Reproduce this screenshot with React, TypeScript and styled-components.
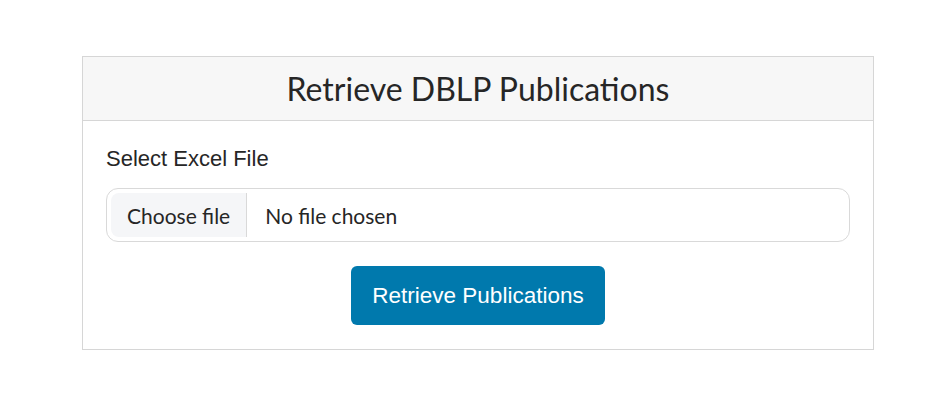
import React from "react";
import styled, { createGlobalStyle } from "styled-components";

const Global = createGlobalStyle`
  html, body { margin: 0; padding: 0; background: #ffffff; }
  body { font-family: "Liberation Sans", Arial, sans-serif; }
`;

const Page = styled.div`
  padding: 56px 75px 0 82px;
  width: 949px;
  box-sizing: border-box;
`;

const Card = styled.div`
  width: 792px;
  border: 1px solid #d6d6d6;
  box-sizing: border-box;
  background: #fff;
`;

const Header = styled.div`
  height: 64px;
  background: #f7f7f7;
  border-bottom: 1px solid #d6d6d6;
  display: flex;
  align-items: center;
  justify-content: center;
  box-sizing: border-box;
`;

const Title = styled.h1`
  margin: 0;
  font-family: Lato, "Open Sans", sans-serif;
  font-weight: 400;
  font-size: 32px;
  color: #262626;
`;

const Body = styled.div`
  padding: 24px 23px 24px 23px;
  display: flex;
  flex-direction: column;
`;

const Label = styled.label`
  font-family: "Liberation Sans", Arial, sans-serif;
  font-size: 22px;
  color: #262626;
  line-height: 28px;
  margin-bottom: 15px;
`;

const FileBox = styled.div`
  height: 54px;
  border: 1px solid #d9d9d9;
  border-radius: 12px;
  display: flex;
  align-items: stretch;
  overflow: hidden;
  box-sizing: border-box;
  padding: 4px 0 4px 4px;
`;

const ChooseBtn = styled.span`
  background: #f5f6f8;
  border-right: 1px solid #d9d9d9;
  display: flex;
  align-items: center;
  padding: 0 16px 0 16px;
  font-family: Lato, "Open Sans", sans-serif;
  font-size: 21px;
  color: #262626;
  border-radius: 8px 0 0 8px;
`;

const FileName = styled.span`
  display: flex;
  align-items: center;
  padding-left: 18px;
  font-family: Lato, "Open Sans", sans-serif;
  font-size: 21px;
  color: #262626;
`;

const Actions = styled.div`
  display: flex;
  justify-content: center;
  margin-top: 24px;
`;

const Button = styled.button`
  width: 254px;
  height: 59px;
  border: none;
  border-radius: 6px;
  background: #0079ad;
  color: #fff;
  font-family: "Liberation Sans", Arial, sans-serif;
  font-size: 22.5px;
  cursor: pointer;
`;

export default function App() {
  return (
    <>
      <Global />
      <Page>
        <Card>
          <Header>
            <Title>Retrieve DBLP Publications</Title>
          </Header>
          <Body>
            <Label>Select Excel File</Label>
            <FileBox>
              <ChooseBtn>Choose file</ChooseBtn>
              <FileName>No file chosen</FileName>
            </FileBox>
            <Actions>
              <Button>Retrieve Publications</Button>
            </Actions>
          </Body>
        </Card>
      </Page>
    </>
  );
}
